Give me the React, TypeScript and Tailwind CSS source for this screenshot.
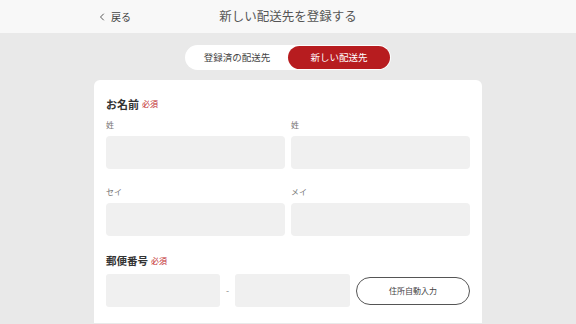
import { ChevronLeft } from "lucide-react";

const font = { fontFamily: '"Noto Sans CJK JP", "Noto Sans", sans-serif' };

function Required() {
    return <span className="ml-[3px] text-[8px] font-normal text-[#c0282d]">必須</span>;
}

function Field({ label }: { label: string }) {
    return (
        <div className="flex flex-col">
            <span className="h-[10px] text-[8px] leading-[10px] text-[#777]">{label}</span>
            <div className="mt-[6px] h-[33px] rounded-[4px] bg-[#f0f0f0]" />
        </div>
    );
}

export default function App() {
    return (
        <div style={font} className="min-h-[324px] w-full bg-[#e9e9e9] text-[#333]">
            {/* Header */}
            <div className="h-[33px] bg-[#f8f8f8]">
                <div className="mx-auto grid h-full w-[388px] grid-cols-[1fr_auto_1fr] items-center">
                    <button className="flex items-center gap-[3px] pl-[2px] text-[10px] text-[#444]">
                        <ChevronLeft size={12} strokeWidth={1.8} /> 戻る
                    </button>
                    <h1 className="text-[12.5px] font-normal text-[#555]">新しい配送先を登録する</h1>
                    <div />
                </div>
            </div>

            {/* Toggle */}
            <div className="flex justify-center pt-[12px]">
                <div className="flex h-[25px] w-[206px] rounded-full bg-white p-[1px]">
                    <button className="flex-1 rounded-full text-[9.5px] text-[#444]">登録済の配送先</button>
                    <button className="flex-1 rounded-full bg-[#b71c1f] text-[9.5px] text-white">新しい配送先</button>
                </div>
            </div>

            {/* Form card */}
            <div className="mx-auto mt-[10px] w-[388px] rounded-t-[6px] bg-white px-[12px] pt-[17px] pb-[16px]">
                <h2 className="flex h-[14px] items-center text-[11px] font-bold leading-[14px]">
                    お名前<Required />
                </h2>
                <div className="mt-[9px] grid grid-cols-2 gap-x-[6px] gap-y-[18px]">
                    <Field label="姓" />
                    <Field label="姓" />
                    <Field label="セイ" />
                    <Field label="メイ" />
                </div>

                <h2 className="mt-[18px] flex h-[14px] items-center text-[10.5px] font-bold leading-[14px]">
                    郵便番号<Required />
                </h2>
                <div className="mt-[6px] flex items-center">
                    <div className="h-[33px] w-[114px] rounded-[3px] bg-[#f0f0f0]" />
                    <span className="w-[15px] text-center text-[9px] text-[#888]">-</span>
                    <div className="h-[33px] w-[115px] rounded-[3px] bg-[#f0f0f0]" />
                    <button className="ml-[6px] h-[28px] flex-1 rounded-full border border-[#555] text-[8px] text-[#444]">
                        住所自動入力
                    </button>
                </div>
            </div>
        </div>
    );
}
